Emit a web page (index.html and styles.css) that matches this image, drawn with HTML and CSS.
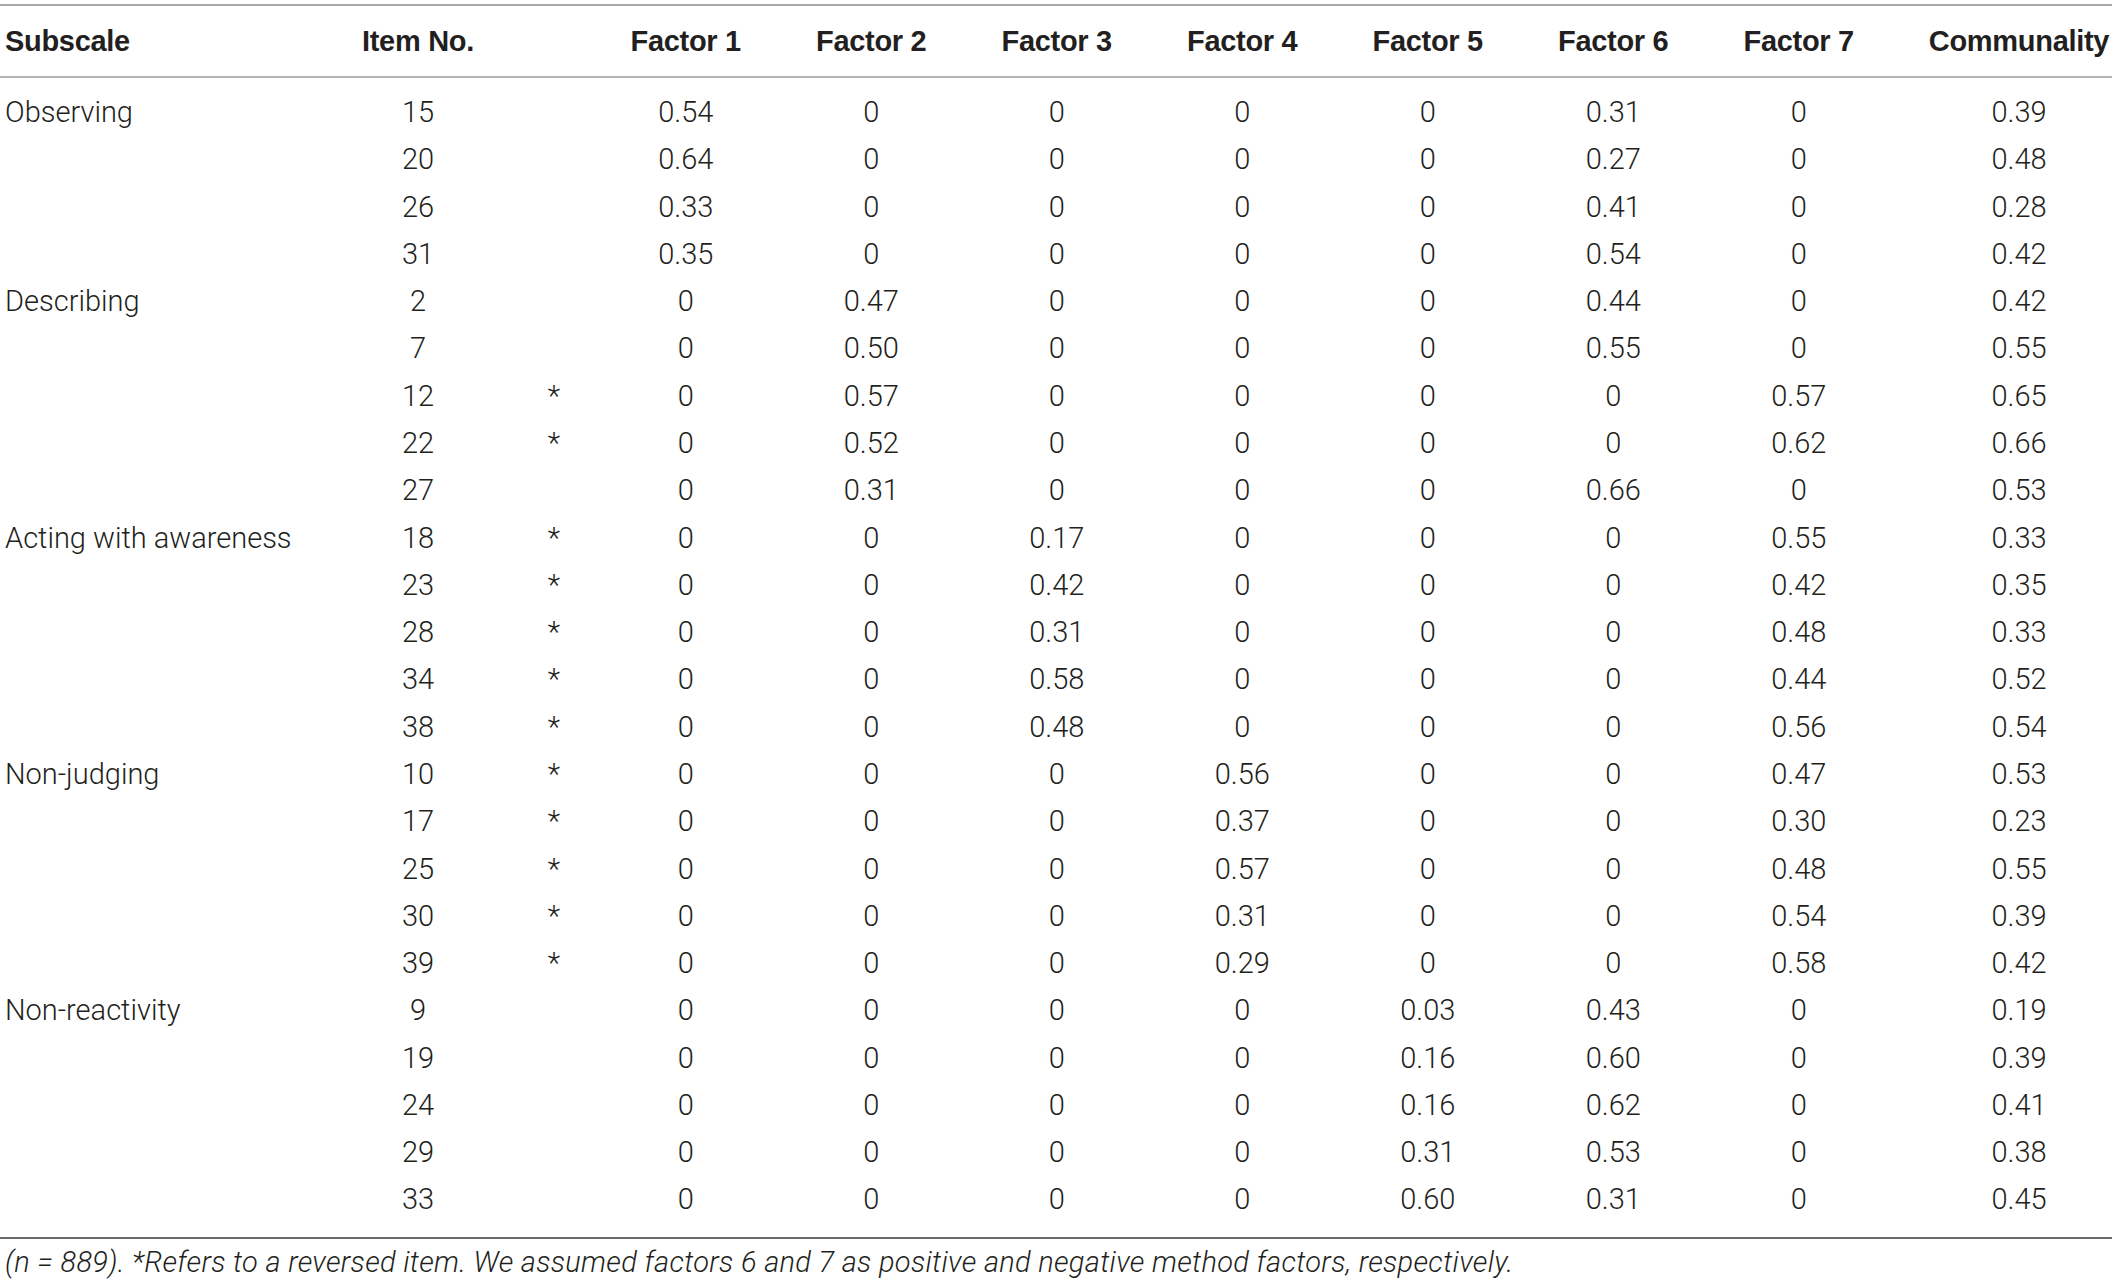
FILE: index.html
```html
<!DOCTYPE html>
<html lang="en">
<head>
    <meta charset="UTF-8">
    <title>Factor loadings</title>
    <link rel="stylesheet" href="styles.css">
</head>
<body>

<!-- Tabel principal -->
<table class="tabel-factori">
    <colgroup>
        <col class="col-subscala">
        <col class="col-item">
        <col class="col-stea">
        <col class="col-factor">
        <col class="col-factor">
        <col class="col-factor">
        <col class="col-factor">
        <col class="col-factor">
        <col class="col-factor">
        <col class="col-factor">
        <col class="col-comm">
    </colgroup>
    <thead>
        <tr>
            <th class="subscala">Subscale</th>
            <th>Item No.</th>
            <th></th>
            <th>Factor 1</th>
            <th>Factor 2</th>
            <th>Factor 3</th>
            <th>Factor 4</th>
            <th>Factor 5</th>
            <th>Factor 6</th>
            <th>Factor 7</th>
            <th class="comm">Communality</th>
        </tr>
    </thead>
    <tbody>
        <tr><td class="subscala">Observing</td><td>15</td><td class="stea"></td><td>0.54</td><td>0</td><td>0</td><td>0</td><td>0</td><td>0.31</td><td>0</td><td class="comm">0.39</td></tr>
        <tr><td class="subscala"></td><td>20</td><td class="stea"></td><td>0.64</td><td>0</td><td>0</td><td>0</td><td>0</td><td>0.27</td><td>0</td><td class="comm">0.48</td></tr>
        <tr><td class="subscala"></td><td>26</td><td class="stea"></td><td>0.33</td><td>0</td><td>0</td><td>0</td><td>0</td><td>0.41</td><td>0</td><td class="comm">0.28</td></tr>
        <tr><td class="subscala"></td><td>31</td><td class="stea"></td><td>0.35</td><td>0</td><td>0</td><td>0</td><td>0</td><td>0.54</td><td>0</td><td class="comm">0.42</td></tr>

        <tr><td class="subscala">Describing</td><td>2</td><td class="stea"></td><td>0</td><td>0.47</td><td>0</td><td>0</td><td>0</td><td>0.44</td><td>0</td><td class="comm">0.42</td></tr>
        <tr><td class="subscala"></td><td>7</td><td class="stea"></td><td>0</td><td>0.50</td><td>0</td><td>0</td><td>0</td><td>0.55</td><td>0</td><td class="comm">0.55</td></tr>
        <tr><td class="subscala"></td><td>12</td><td class="stea">*</td><td>0</td><td>0.57</td><td>0</td><td>0</td><td>0</td><td>0</td><td>0.57</td><td class="comm">0.65</td></tr>
        <tr><td class="subscala"></td><td>22</td><td class="stea">*</td><td>0</td><td>0.52</td><td>0</td><td>0</td><td>0</td><td>0</td><td>0.62</td><td class="comm">0.66</td></tr>
        <tr><td class="subscala"></td><td>27</td><td class="stea"></td><td>0</td><td>0.31</td><td>0</td><td>0</td><td>0</td><td>0.66</td><td>0</td><td class="comm">0.53</td></tr>

        <tr><td class="subscala">Acting with awareness</td><td>18</td><td class="stea">*</td><td>0</td><td>0</td><td>0.17</td><td>0</td><td>0</td><td>0</td><td>0.55</td><td class="comm">0.33</td></tr>
        <tr><td class="subscala"></td><td>23</td><td class="stea">*</td><td>0</td><td>0</td><td>0.42</td><td>0</td><td>0</td><td>0</td><td>0.42</td><td class="comm">0.35</td></tr>
        <tr><td class="subscala"></td><td>28</td><td class="stea">*</td><td>0</td><td>0</td><td>0.31</td><td>0</td><td>0</td><td>0</td><td>0.48</td><td class="comm">0.33</td></tr>
        <tr><td class="subscala"></td><td>34</td><td class="stea">*</td><td>0</td><td>0</td><td>0.58</td><td>0</td><td>0</td><td>0</td><td>0.44</td><td class="comm">0.52</td></tr>
        <tr><td class="subscala"></td><td>38</td><td class="stea">*</td><td>0</td><td>0</td><td>0.48</td><td>0</td><td>0</td><td>0</td><td>0.56</td><td class="comm">0.54</td></tr>

        <tr><td class="subscala">Non-judging</td><td>10</td><td class="stea">*</td><td>0</td><td>0</td><td>0</td><td>0.56</td><td>0</td><td>0</td><td>0.47</td><td class="comm">0.53</td></tr>
        <tr><td class="subscala"></td><td>17</td><td class="stea">*</td><td>0</td><td>0</td><td>0</td><td>0.37</td><td>0</td><td>0</td><td>0.30</td><td class="comm">0.23</td></tr>
        <tr><td class="subscala"></td><td>25</td><td class="stea">*</td><td>0</td><td>0</td><td>0</td><td>0.57</td><td>0</td><td>0</td><td>0.48</td><td class="comm">0.55</td></tr>
        <tr><td class="subscala"></td><td>30</td><td class="stea">*</td><td>0</td><td>0</td><td>0</td><td>0.31</td><td>0</td><td>0</td><td>0.54</td><td class="comm">0.39</td></tr>
        <tr><td class="subscala"></td><td>39</td><td class="stea">*</td><td>0</td><td>0</td><td>0</td><td>0.29</td><td>0</td><td>0</td><td>0.58</td><td class="comm">0.42</td></tr>

        <tr><td class="subscala">Non-reactivity</td><td>9</td><td class="stea"></td><td>0</td><td>0</td><td>0</td><td>0</td><td>0.03</td><td>0.43</td><td>0</td><td class="comm">0.19</td></tr>
        <tr><td class="subscala"></td><td>19</td><td class="stea"></td><td>0</td><td>0</td><td>0</td><td>0</td><td>0.16</td><td>0.60</td><td>0</td><td class="comm">0.39</td></tr>
        <tr><td class="subscala"></td><td>24</td><td class="stea"></td><td>0</td><td>0</td><td>0</td><td>0</td><td>0.16</td><td>0.62</td><td>0</td><td class="comm">0.41</td></tr>
        <tr><td class="subscala"></td><td>29</td><td class="stea"></td><td>0</td><td>0</td><td>0</td><td>0</td><td>0.31</td><td>0.53</td><td>0</td><td class="comm">0.38</td></tr>
        <tr><td class="subscala"></td><td>33</td><td class="stea"></td><td>0</td><td>0</td><td>0</td><td>0</td><td>0.60</td><td>0.31</td><td>0</td><td class="comm">0.45</td></tr>
    </tbody>
</table>

<!-- Nota de subsol -->
<p class="nota">(<span class="n">n</span> = 889). *Refers to a reversed item. We assumed factors 6 and 7 as positive and negative method factors, respectively.</p>

</body>
</html>
```

FILE: styles.css
```css
/* Stil general pentru pagina */
body {
    background-color: #ffffff;
    color: #231f20;
    font-family: Roboto, 'Liberation Sans', sans-serif;
    font-weight: 300;
    font-size: 29px;
    margin: 0;
    padding: 0;
}

.tabel-factori {
    width: 2112px;
    margin-top: 4px;
    border-collapse: collapse;
    table-layout: fixed;
}

/* Latimi coloane */
.col-subscala { width: 330px; }
.col-item     { width: 176px; }
.col-stea     { width: 87px; }
.col-factor   { width: 185.5px; }
.col-comm     { width: 220.5px; }

/* Antet */
.tabel-factori thead th {
    font-family: 'Liberation Sans', Arial, sans-serif;
    font-weight: bold;
    font-size: 29px;
    letter-spacing: -0.3px;
    color: #231f20;
    height: 70px;
    padding: 0;
    text-align: center;
    vertical-align: middle;
    border-top: 2px solid #a9a9a9;
    border-bottom: 2px solid #b4b4b4;
    white-space: nowrap;
}

/* Celule */
.tabel-factori td {
    padding: 0;
    line-height: 47.28px;
    text-align: center;
    vertical-align: middle;
    white-space: nowrap;
}

.tabel-factori th.subscala,
.tabel-factori td.subscala {
    text-align: left;
    padding-left: 5px;
}

.tabel-factori th.comm,
.tabel-factori td.comm {
    padding-left: 34.5px;
}

.tabel-factori td.stea {
    padding-left: 9px;
}

/* Spatiu sus / jos in corpul tabelului */
.tabel-factori tbody tr:first-child td {
    padding-top: 11px;
}

.tabel-factori tbody tr:last-child td {
    padding-bottom: 13px;
    border-bottom: 2px solid #6b6b6b;
}

/* Nota */
.nota {
    margin: 0;
    padding-top: 5px;
    padding-left: 5px;
    font-style: italic;
    font-size: 29px;
    letter-spacing: 0.3px;
    line-height: 36px;
    white-space: nowrap;
}
```
